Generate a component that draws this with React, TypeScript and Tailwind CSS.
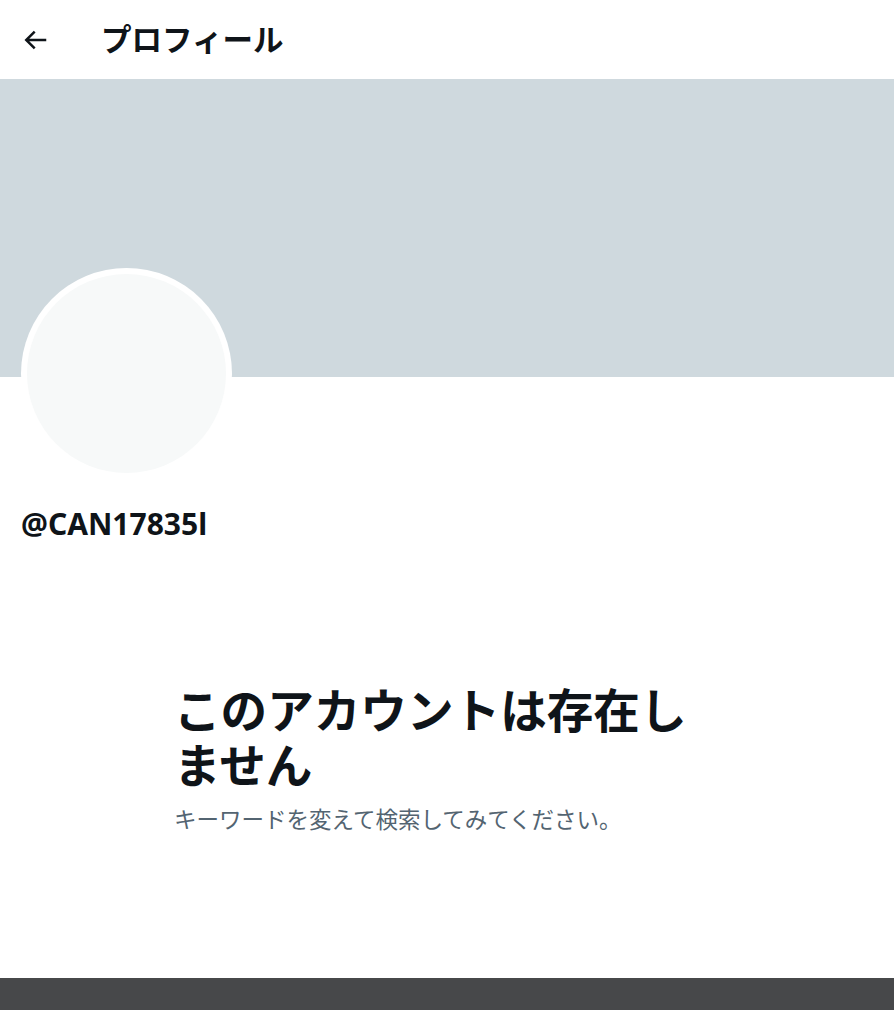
import React from 'react';

const BackArrow: React.FC = () => (
  <svg viewBox="0 0 24 24" className="w-[30px] h-[30px]" fill="#0f1419">
    <path d="M7.414 13l5.043 5.04-1.414 1.42L3.586 12l7.457-7.46 1.414 1.42L7.414 11H21v2H7.414z" />
  </svg>
);

const App: React.FC = () => {
  return (
    <div
      className="min-h-screen flex flex-col bg-white text-[#0f1419]"
      style={{ fontFamily: '"Noto Sans", "Noto Sans CJK JP", sans-serif' }}
    >
      {/* header */}
      <div className="h-[79px] flex items-center px-[20px] shrink-0">
        <BackArrow />
        <h1 className="ml-[51px] text-[30.5px] font-bold leading-none">プロフィール</h1>
      </div>

      {/* banner */}
      <div className="h-[298px] bg-[#cfd9de] shrink-0" />

      {/* profile */}
      <div className="px-[21px]">
        <div className="-mt-[109px] w-[211px] h-[211px] rounded-full bg-white p-[6px]">
          <div className="w-full h-full rounded-full bg-[#f7f9f9]" />
        </div>
        <div className="mt-[29px] text-[30px] font-bold leading-[32px]">@CAN17835l</div>
      </div>

      {/* empty state */}
      <div className="flex-1">
        <div className="w-[540px] mx-auto mt-[143px] -translate-x-[3px]">
          <h2 className="text-[46.6px] font-bold leading-[55px]">このアカウントは存在しません</h2>
          <p className="mt-[12px] text-[22.5px] leading-[30px] text-[#536471]">
            キーワードを変えて検索してみてください。
          </p>
        </div>
      </div>

      {/* bottom bar */}
      <div className="h-[32px] bg-[#47484a] shrink-0" />
    </div>
  );
};

export default App;
